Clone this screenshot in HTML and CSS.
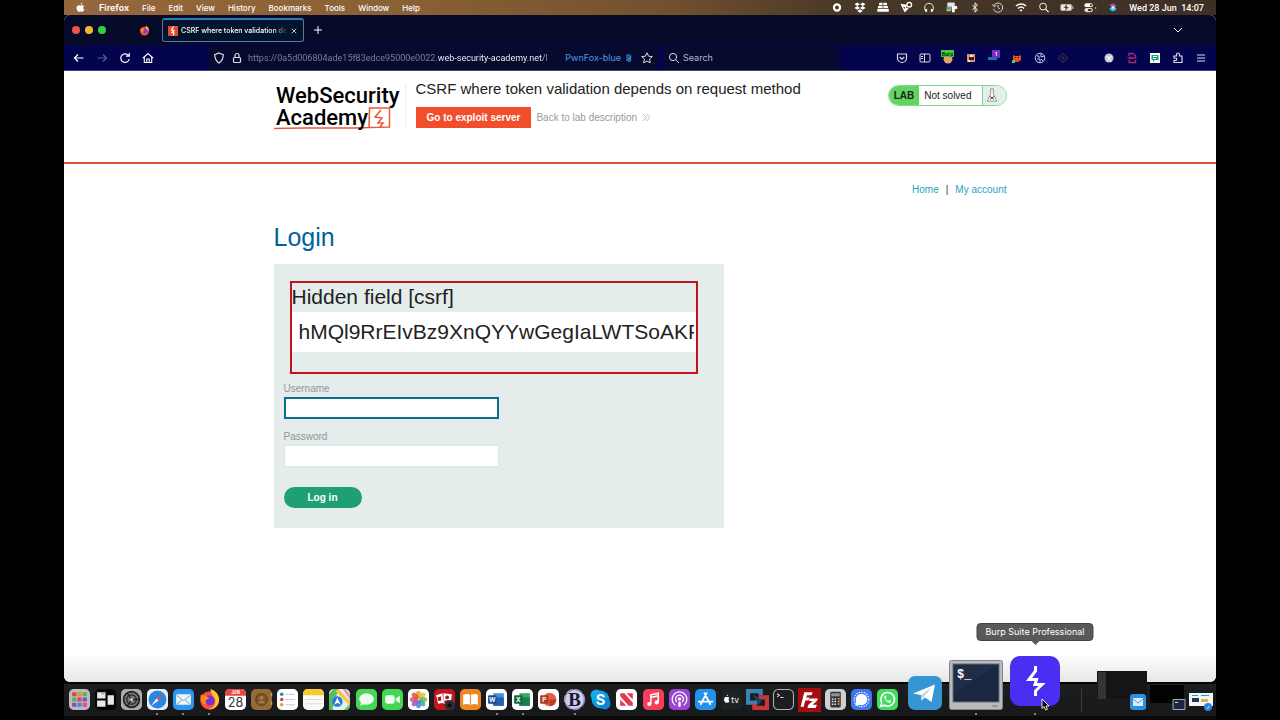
FILE: index.html
```html
<!DOCTYPE html>
<html lang="en">
<head>
    <meta charset="UTF-8">
    <meta name="viewport" content="width=device-width, initial-scale=1.0">
    <title>CSRF where token validation depends on request method</title>
    <link rel="stylesheet" href="styles.css">
</head>
<body>
<div class="desktop">

    <!-- macOS menu bar -->
    <header class="menubar">
        <nav class="menus">
            <svg class="apple" viewBox="0 0 14 14"><path fill="#fff" d="M9.4 1c.1 1-.9 2.300-2.200 2.300C7.100 2.200 8.100 1.100 9.400 1zM11.800 9.600c-.6 1.500-1.500 2.900-2.600 2.900-.8 0-1-.5-2-.5s-1.300.5-2 .5C3.700 12.500 2 9.900 2 7.500 2 5.200 3.400 4 4.900 4c.9 0 1.600.6 2.200.6S8.500 4 9.600 4c.8 0 1.600.4 2.100 1.100-1.900 1.200-1.600 3.700.1 4.500z"/></svg>
            <button class="menu menu-app">Firefox</button>
            <button class="menu">File</button>
            <button class="menu">Edit</button>
            <button class="menu">View</button>
            <button class="menu">History</button>
            <button class="menu">Bookmarks</button>
            <button class="menu">Tools</button>
            <button class="menu">Window</button>
            <button class="menu">Help</button>
        </nav>
        <div class="tray">
            <svg class="icon" viewBox="0 0 14 14"><circle cx="7" cy="7" r="3.300" fill="none" stroke="#fff" stroke-width="2.400"/></svg>
            <svg class="icon" viewBox="0 0 14 14"><path fill="#fff" d="M4 1.500l3 2-3 2-3-2zM10 1.500l3 2-3 2-3-2zM4 5.500l3 2-3 2-3-2zM10 5.500l3 2-3 2-3-2zM7 8.900l3 1.900-3 1.900-3-1.900z"/></svg>
            <svg class="icon" viewBox="0 0 14 14"><path fill="#fff" d="M3 2h3.600v2.500H2.500zM7.400 2H11l.5 2.500H7.400zM2 5.300h4.600v2.500H1.200zM7.400 5.300H12l.8 2.500H7.400zM.8 8.600h12.400v3H.8z"/></svg>
            <svg class="icon" viewBox="0 0 14 14"><path fill="#fff" d="M1 3l7 1-1 3 3 1-4.500 4.500zM4 6l1 3 1-2z"/><circle cx="10.500" cy="4" r="2.500" fill="none" stroke="#fff" stroke-width="1.500"/></svg>
            <svg class="icon" viewBox="0 0 14 14"><path fill="none" stroke="#fff" d="M4 11.500C1.500 9.500 1.500 2.500 7 2.500s5.500 7 3 9"/><path stroke="#fff" stroke-width="2" d="M4 8.500v3M10 8.500v3"/></svg>
            <svg class="icon" viewBox="0 0 14 14"><rect x="2" y="1.500" width="8" height="7" rx="1" fill="#e9e6dd"/><path fill="#4d9bd9" d="M1 6h6v3H1z"/><path fill="#e2bf3f" d="M1 9h5v2H1z"/><path fill="#fff" d="M7 6l5-1 1 3-3 1v3H7z"/></svg>
            <svg class="icon" viewBox="0 0 14 14"><path fill="none" stroke="#fff" d="M4.200 4.500l5.500 5L7 12V2l2.700 2.500-5.500 5"/></svg>
            <svg class="icon" viewBox="0 0 14 14"><path fill="none" stroke="#ddd" d="M2.500 5a5 5 0 1 1-.3 3.500M1 3.500L2.500 6 5 5M7 4v3.200l2.200 1.300"/></svg>
            <svg class="icon" viewBox="0 0 14 14"><path fill="none" stroke="#fff" stroke-width="1.500" d="M1.500 5.500c3.200-3 7.800-3 11 0M3.700 8c2-1.800 4.600-1.800 6.600 0"/><path fill="#fff" d="M5.300 9.800c1-.9 2.400-.9 3.400 0L7 11.600z"/></svg>
            <svg class="icon" viewBox="0 0 14 14"><circle cx="6" cy="6" r="3.700" fill="none" stroke="#fff"/><path stroke="#fff" stroke-width="1.300" d="M8.800 8.800L12 12"/></svg>
            <svg class="icon" viewBox="0 0 14 14"><rect x="0" y="3.500" width="12" height="7" rx="1.500" fill="#e8e4df"/><path stroke="#e8e4df" d="M13.300 5.500v3"/><path fill="#3d3026" d="M7.400 3L3.500 7.400H6L4.700 11l4.100-4.600H6.300z"/></svg>
            <svg class="icon" viewBox="0 0 14 14"><rect x="1" y="2.500" width="9" height="4" rx="2" fill="#fff"/><circle cx="8" cy="4.500" r="1.200" fill="#4a3a2c"/><rect x="1.500" y="8" width="8" height="3.500" rx="1.700" fill="none" stroke="#fff"/><circle cx="3.500" cy="9.700" r="1.300" fill="#fff"/><circle cx="13" cy="7.500" r="1" fill="#e28b2d"/></svg>
            <svg class="icon" viewBox="0 0 14 14"><circle cx="7" cy="7" r="5" fill="#25334f"/><path fill="#b64d94" d="M3 5c3-4 7-2 8 1L7 7z"/><path fill="#42c3d3" d="M3 8c2 4 6 4 8 0L7 6z"/><circle cx="7" cy="7" r="1.600" fill="#e6f4ff"/></svg>
            <span class="clock">Wed 28 Jun&nbsp; 14:07</span>
        </div>
    </header>

    <section class="window">
        <div class="tabstrip">
            <div class="lights"><span class="light red"></span><span class="light amber"></span><span class="light green"></span></div>
            <svg class="pinned" viewBox="0 0 20 20"><circle cx="10" cy="11" r="8" fill="#ff4b3a"/><path fill="#ffbd2e" d="M12 1c5 3 7 7 6 11-1-3-3-4-5-5z"/><circle cx="10.500" cy="11" r="4.500" fill="#7a3ae0"/><path fill="#ff8a1e" d="M2 8c2-3 4-2 6-1l2 2c-3 1-3 3-1 5-4-1-6-3-7-6z"/></svg>
            <div class="tab">
                <svg class="favicon" viewBox="0 0 20 20"><rect width="20" height="20" fill="#e8482c"/><path fill="none" stroke="#fff" stroke-width="2.400" d="M11 1L7 8l5 1-4 4 4 1-2 5"/></svg>
                <span class="tab-title">CSRF where token validation de</span>
                <button class="tab-close" aria-label="Close tab"><svg viewBox="0 0 8 8"><path stroke="#fff" d="M1 1l6 6M7 1L1 7"/></svg></button>
            </div>
            <button class="new-tab" aria-label="New tab"><svg viewBox="0 0 8 8"><path stroke="#fff" d="M4 0v8M0 4h8"/></svg></button>
            <button class="all-tabs" aria-label="List all tabs"><svg viewBox="0 0 8 8"><path fill="none" stroke="#fff" d="M0 2l4 4 4-4"/></svg></button>
        </div>

        <div class="toolbar">
            <div class="nav-buttons">
                <button class="tool" aria-label="Back"><svg class="icon" viewBox="0 0 14 14"><path fill="none" stroke="#fff" stroke-width="1.200" d="M11.500 7h-9M6 3.500L2.500 7 6 10.500"/></svg></button>
                <button class="tool" aria-label="Forward"><svg class="icon" viewBox="0 0 14 14"><path fill="none" stroke="#585c9c" stroke-width="1.200" d="M2.500 7h9M8 3.500L11.500 7 8 10.500"/></svg></button>
                <button class="tool" aria-label="Reload"><svg class="icon" viewBox="0 0 14 14"><path fill="none" stroke="#fff" stroke-width="1.200" d="M10.500 4.500A4.300 4.300 0 1 0 11.300 8M11.300 2v3.200H8"/></svg></button>
                <button class="tool" aria-label="Home"><svg class="icon" viewBox="0 0 14 14"><path fill="none" stroke="#fff" stroke-width="1.100" d="M2 7l5-4.500L12 7M3.300 6v5.500h7.400V6M5.800 11.500V8h2.400v3.500"/></svg></button>
            </div>
            <div class="urlbar">
                <svg class="icon" viewBox="0 0 14 14"><path fill="none" stroke="#ddd" stroke-width="1.200" d="M7 2l4.300 1.600c0 4.200-1.300 6.600-4.300 8.400-3-1.800-4.300-4.200-4.300-8.400z"/></svg>
                <svg class="icon" viewBox="0 0 14 14"><rect x="3.500" y="6.500" width="7" height="5" rx="1" fill="none" stroke="#ddd" stroke-width="1.200"/><path fill="none" stroke="#ddd" stroke-width="1.200" d="M5 6.500V4.500a2 2 0 0 1 4 0v2"/></svg>
                <input class="url" type="text" aria-label="Address" value="https://0a5d006804ade15f83edce95000e0022.web-security-academy.net/l">
                <span class="container-name">PwnFox-blue</span>
                <svg class="print" viewBox="0 0 10 14"><path fill="none" stroke="#3f95dd" stroke-width="1.500" d="M2 4c2-2.500 5-2 6 0v5c0 2-1 3-2 3.500M1.500 7c2-3 5-2 5 0s0 3-2.500 5M1.500 10c2 0 3-1 3-3"/></svg>
                <svg class="icon" viewBox="0 0 14 14"><path fill="none" stroke="#ddd" d="M7 1.800l1.600 3.400 3.700.4-2.800 2.500.8 3.700L7 10l-3.300 1.800.8-3.700-2.800-2.500 3.700-.4z"/></svg>
            </div>
            <div class="searchbar">
                <svg class="icon" viewBox="0 0 14 14"><circle cx="6" cy="6" r="3.600" fill="none" stroke="#ddd"/><path stroke="#ddd" d="M8.700 8.700L12 12"/></svg>
                <input class="search" type="text" aria-label="Search" placeholder="Search">
            </div>
            <div class="extensions">
                <svg class="icon" viewBox="0 0 14 14"><path fill="none" stroke="#ddd" stroke-width="1.200" d="M2.500 3h9v4a4.500 4.500 0 0 1-9 0zM4.700 6L7 8.200 9.300 6"/></svg>
                <svg class="icon" viewBox="0 0 14 14"><rect x="2" y="3" width="10" height="8" rx="1" fill="none" stroke="#ddd"/><path stroke="#ddd" d="M6.500 3v8M3 5.500h2M3 7.500h2"/></svg>
                <svg class="icon" viewBox="0 0 14 14"><circle cx="7" cy="8" r="4.500" fill="#e0a764"/><rect x="0" y="-1" width="13" height="7" fill="#43c83f"/><text class="badge-text" x="6.500" y="4.500" fill="#052c05">Burp</text></svg>
                <svg class="icon" viewBox="0 0 14 14"><rect x="3" y="3" width="8" height="8" fill="#d8946c"/><path fill="#411d15" d="M5 6h5v3H5z"/><path fill="#f4dfc9" d="M6 4h3v2H6zM4 9h2v2H4z"/></svg>
                <svg class="icon" viewBox="0 0 14 14"><path fill="#187ab1" d="M1 6h9v3H1z"/><rect x="5" y="-1" width="8" height="8" fill="#7230c4"/><text class="badge-text" x="9" y="5" fill="#fff">1</text></svg>
                <svg class="icon" viewBox="0 0 14 14"><path fill="#e8502a" d="M3 4l2 1h4l2-1v5l-3 2H5L3 8z"/><path fill="#401015" d="M5 6h1v1H5zM8 6h1v1H8z"/><rect x="2" y="9" width="3" height="3" fill="#3de052"/></svg>
                <svg class="icon" viewBox="0 0 14 14"><circle cx="7" cy="7" r="4.800" fill="none" stroke="#c9c9e4"/><path fill="none" stroke="#c9c9e4" d="M5 4v2h2M8 3v3l3-1M4 8h3v3M8 8l2 2"/></svg>
                <svg class="icon" viewBox="0 0 14 14"><path fill="none" stroke="#29204f" stroke-width="1.500" d="M7 2.500L11.500 7 7 11.500 2.500 7zM7 5v4M5 7h4"/></svg>
                <svg class="icon" viewBox="0 0 14 14"><path fill="#04062e" d="M3 6h8v2.500H3z"/></svg>
                <svg class="icon" viewBox="0 0 14 14"><circle cx="7" cy="7" r="4.500" fill="#c4c9cf"/><path fill="none" stroke="#fff" d="M4 5c2 2 4 2 6 0M5 10l2-3 2 3"/></svg>
                <svg class="icon" viewBox="0 0 14 14"><path fill="none" stroke="#9c2f72" stroke-width="1.300" d="M4 5V2.500h4l2.500 2V6M4 9v2.500h6.500V9M2.500 7h9M5.500 5.500v3"/></svg>
                <svg class="icon" viewBox="0 0 14 14"><rect x="2" y="2" width="10" height="10" fill="#f5fbf9"/><path fill="#1fa37d" d="M3.500 4h7v5H7l-2 2V9H3.500z"/><path stroke="#fff" d="M5 5.500h4M5 7.500h3"/></svg>
                <svg class="icon" viewBox="0 0 14 14"><path fill="none" stroke="#ddd" stroke-width="1.200" d="M3 5h2.500V3.500a1.500 1.500 0 0 1 3 0V5H11v6.500H3V9.500h1.500a1.200 1.200 0 0 0 0-2.500H3z"/></svg>
                <svg class="icon" viewBox="0 0 14 14"><path stroke="#ddd" d="M3 4h8M3 7h8M3 10h8"/></svg>
            </div>
        </div>

        <!-- Lab page -->
        <main class="page">
            <header class="lab-header">
                <div class="container lab-bar">
                    <a class="logo" href="#" aria-label="Web Security Academy">
                        <svg viewBox="0 0 128 46">
                            <path fill="none" stroke="#e8593a" stroke-width="1.500" d="M0 44.500c30-1.500 60 .5 95-1l.5-19.500h20V43l-20 .5M107 26l-6 7 7 1-4 5h5l-3 4"/>
                            <text class="logo-text" x="2" y="19">WebSecurity</text>
                            <text class="logo-text" x="2" y="41">Academy</text>
                        </svg>
                    </a>
                    <div class="lab-info">
                        <h2>CSRF where token validation depends on request method</h2>
                        <div class="lab-links">
                            <a class="exploit" href="#">Go to exploit server</a>
                            <a class="back" href="#">Back to lab description <svg viewBox="0 0 8 8"><path fill="none" stroke="#aaa" d="M0 0l4 4-4 4M4 0l4 4-4 4"/></svg></a>
                        </div>
                    </div>
                    <div class="lab-status">
                        <span class="lab-tag">LAB</span>
                        <span class="lab-state">Not solved</span>
                        <span class="lab-flask"><svg viewBox="0 0 12 16"><path fill="#fff" stroke="#777" stroke-width=".8" d="M4 1h4M4.600 1v5L1 14h10L7.400 6V1"/><path stroke="#333" d="M4 9l4 3M8 9l-4 3"/></svg></span>
                    </div>
                </div>
            </header>

            <div class="container">
                <nav class="account-links"><a href="#">Home</a><span>|</span><a href="#">My account</a></nav>
                <h1>Login</h1>
                <form class="login-form">
                    <div class="hidden-field">
                        <label for="csrf">Hidden field [csrf]</label>
                        <input id="csrf" type="text" name="csrf" value="hMQl9RrEIvBz9XnQYYwGegIaLWTSoAKF">
                    </div>
                    <label for="username">Username</label>
                    <input class="field focused" id="username" type="text" name="username">
                    <label for="password">Password</label>
                    <input class="field" id="password" type="password" name="password">
                    <button class="login-button" type="button">Log in</button>
                </form>
            </div>
        </main>
    </section>

    <!-- Dock -->
    <footer class="dock">
        <div class="apps small">
            <button class="app" aria-label="Launchpad"><svg viewBox="0 0 20 20"><rect width="20" height="20" rx="4.500" fill="#b9bcc1"/><path fill="#d8464c" d="M3 3h4v4H3zM8 8h4v4H8z"/><path fill="#f08e2c" d="M8 3h4v4H8z"/><path fill="#55b74d" d="M13 3h4v4h-4zM3 8h4v4H3z"/><path fill="#8c4bbd" d="M13 8h4v4h-4zM3 13h4v4H3z"/><path fill="#3f8de0" d="M8 13h4v4H8z"/><path fill="#e0508b" d="M13 13h4v4h-4z"/></svg></button>
            <button class="app" aria-label="Mission Control"><svg viewBox="0 0 20 20"><rect width="20" height="20" rx="4.500" fill="#050505"/><path fill="#e5e8e3" d="M2 3h8v6H2zM2 11h8v6H2zM12 6h6v9h-6z"/><path fill="#5cae7c" d="M6 4h3v1H6z"/></svg></button>
            <button class="app" aria-label="System Settings"><svg viewBox="0 0 20 20"><rect width="20" height="20" rx="4.500" fill="#a9adb0"/><circle cx="10" cy="10" r="7.500" fill="#777" stroke="#222" stroke-width="1.600"/><circle cx="10" cy="10" r="4.500" fill="none" stroke="#222" stroke-width="1.200"/><path stroke="#222" stroke-width="1.200" d="M10 10h7M10 10l-4 6M10 10L6 4"/><circle cx="10" cy="10" r="1.500" fill="#ccc"/></svg></button>
            <button class="app running" aria-label="Safari"><svg viewBox="0 0 20 20"><rect width="20" height="20" rx="4.500" fill="#e9edf2"/><circle cx="10" cy="10" r="8.500" fill="#2a86e2"/><path fill="#ed4b42" d="M16 4l-5 7-2-2z"/><path fill="#fff" d="M4 16l5-7 2 2z"/></svg></button>
            <button class="app running" aria-label="Mail"><svg viewBox="0 0 20 20"><rect width="20" height="20" rx="4.500" fill="#2b97ee"/><rect x="3" y="5" width="14" height="10" rx="1" fill="#eef6fb"/><path fill="none" stroke="#8fb1c9" d="M3.500 6l6.500 5 6.500-5M4 14.500l4-4M16 14.500l-4-4"/></svg></button>
            <button class="app running" aria-label="Firefox"><svg viewBox="0 0 20 20"><circle cx="10" cy="11" r="8.800" fill="#ff4a3d"/><path fill="#ffc52e" d="M11 0c6 2 9 7 8 12-1 5-5 8-10 7 5-1 8-5 6-10-1-2-4-4-4-9z"/><circle cx="10" cy="11" r="4.800" fill="#7433d6"/><path fill="#ff8b1d" d="M2 5c1 1 2 2 4 1l4 3c-4 1-5 3-2 6-5 0-8-4-6-10z"/></svg></button>
            <button class="app" aria-label="Calendar"><svg viewBox="0 0 20 20"><rect width="20" height="20" rx="4.500" fill="#fff"/><path fill="#e9443d" d="M0 6.500V4.500A4.500 4.500 0 0 1 4.500 0h11A4.500 4.500 0 0 1 20 4.500v2z"/><text class="cal-month" x="10" y="5">JUN</text><text class="cal-day" x="10" y="17">28</text></svg></button>
            <button class="app" aria-label="Contacts"><svg viewBox="0 0 20 20"><rect width="20" height="20" rx="4.500" fill="#946a38"/><circle cx="10" cy="10" r="5.500" fill="#7c5529" stroke="#5e401e"/><circle cx="10" cy="8.500" r="2" fill="#a37a48"/><path fill="#a37a48" d="M6.500 13.500c1-3 6-3 7 0z"/><path stroke="#d59b37" stroke-width="1.500" d="M19.500 4v3M19.500 12v3"/></svg></button>
            <button class="app" aria-label="Reminders"><svg viewBox="0 0 20 20"><rect width="20" height="20" rx="4.500" fill="#fff"/><circle cx="4.500" cy="5" r="1.700" fill="#2c7de0"/><circle cx="4.500" cy="10" r="1.700" fill="#e0473e"/><circle cx="4.500" cy="15" r="1.700" fill="#ee9a32"/><path stroke="#ccc" d="M8 5h9M8 10h9M8 15h9"/></svg></button>
            <button class="app" aria-label="Notes"><svg viewBox="0 0 20 20"><rect width="20" height="20" rx="4.500" fill="#fbfaf6"/><path fill="#f9c930" d="M0 6V4.500A4.500 4.500 0 0 1 4.500 0h11A4.500 4.500 0 0 1 20 4.500V6z"/><path stroke="#dedbd3" d="M2 10h16M2 14h16"/></svg></button>
            <button class="app" aria-label="Maps"><svg viewBox="0 0 20 20"><rect width="20" height="20" rx="4.500" fill="#e6eee4"/><path fill="#55bd61" d="M0 5l4-5h5L3 20H0z"/><path fill="#eb8eb8" d="M13 0h3l4 6v4z"/><path fill="#f6c63c" d="M9 0l11 12v4L6 2z"/><path fill="#63c36b" d="M14 20l6-6v3l-2 3z"/><circle cx="8" cy="12" r="5" fill="#2878df"/><path fill="#fff" d="M8 8l3 7-3-2-3 2z"/></svg></button>
            <button class="app" aria-label="Messages"><svg viewBox="0 0 20 20"><rect width="20" height="20" rx="4.500" fill="#43d853"/><ellipse cx="10" cy="9.500" rx="7" ry="5.500" fill="#eefcef"/><path fill="#eefcef" d="M5 12l-1 4 5-2z"/></svg></button>
            <button class="app" aria-label="FaceTime"><svg viewBox="0 0 20 20"><rect width="20" height="20" rx="4.500" fill="#43d853"/><rect x="3" y="6" width="9" height="8" rx="2" fill="#eefcef"/><path fill="#eefcef" d="M13 9l4-2.500v7L13 11z"/></svg></button>
            <button class="app" aria-label="Photos"><svg viewBox="0 0 20 20"><rect width="20" height="20" rx="4.500" fill="#fff"/><g fill-opacity=".85"><ellipse cx="10" cy="5.500" rx="2.500" ry="3.800" fill="#f39a2c"/><ellipse cx="10" cy="5.500" rx="2.500" ry="3.800" fill="#d9c636" transform="rotate(45 10 10)"/><ellipse cx="10" cy="5.500" rx="2.500" ry="3.800" fill="#74bd4f" transform="rotate(90 10 10)"/><ellipse cx="10" cy="5.500" rx="2.500" ry="3.800" fill="#45a7a1" transform="rotate(135 10 10)"/><ellipse cx="10" cy="5.500" rx="2.500" ry="3.800" fill="#4a86d4" transform="rotate(180 10 10)"/><ellipse cx="10" cy="5.500" rx="2.500" ry="3.800" fill="#8b62b7" transform="rotate(225 10 10)"/><ellipse cx="10" cy="5.500" rx="2.500" ry="3.800" fill="#cf5795" transform="rotate(270 10 10)"/><ellipse cx="10" cy="5.500" rx="2.500" ry="3.800" fill="#e9503f" transform="rotate(315 10 10)"/></g></svg></button>
            <button class="app" aria-label="Photo Booth"><svg viewBox="0 0 20 20"><rect width="20" height="20" rx="4.500" fill="#c4161f"/><path fill="#fff" d="M2 6l6-2 1 9-5 1zM9 4l8 1-1 9H9z"/><circle cx="12.500" cy="8" r="1.800" fill="#a9121c"/><path fill="#a9121c" d="M9.500 13c0-3 6-3 6 0zM3.500 8l3-1 .5 4-3 .5z"/><circle cx="15" cy="15.500" r="5" fill="#2c2e31"/><circle cx="15" cy="15.500" r="2" fill="#0c0c0e"/></svg></button>
            <button class="app" aria-label="Books"><svg viewBox="0 0 20 20"><rect width="20" height="20" rx="4.500" fill="#f08522"/><path fill="#fff" d="M3 5.500c2-1 5-1 6.500 0V15c-2-1-4.500-1-6.500 0zM10.500 5.500c2-1 5-1 6.500 0V15c-2-1-4.500-1-6.500 0z"/></svg></button>
            <button class="app running" aria-label="Word"><svg viewBox="0 0 20 20"><rect width="20" height="20" rx="4.500" fill="#fff"/><path fill="#3f93df" d="M7 4h10v12H7z"/><path fill="#2361b5" d="M7 8h10v8H7z"/><rect x="2" y="6" width="8" height="8" rx="1" fill="#174a94"/><text class="glyph" x="6" y="12.500">W</text></svg></button>
            <button class="app running" aria-label="Excel"><svg viewBox="0 0 20 20"><rect width="20" height="20" rx="4.500" fill="#fff"/><path fill="#2fad69" d="M7 4h10v12H7z"/><path fill="#16814a" d="M7 8h10v8H7z"/><rect x="2" y="6" width="8" height="8" rx="1" fill="#0f6a38"/><text class="glyph" x="6" y="12.500">X</text></svg></button>
            <button class="app" aria-label="PowerPoint"><svg viewBox="0 0 20 20"><rect width="20" height="20" rx="4.500" fill="#fff"/><circle cx="11" cy="10" r="6.500" fill="#e06443"/><path fill="#bf3c24" d="M11 10h6.500a6.500 6.500 0 0 1-6.500 6.500z"/><rect x="2" y="6" width="8" height="8" rx="1" fill="#b53a22"/><text class="glyph" x="6" y="12.500">P</text></svg></button>
            <button class="app running" aria-label="BBEdit"><svg viewBox="0 0 20 20"><circle cx="10" cy="10" r="9.500" fill="#cfcbea" stroke="#8f8ac2" stroke-width="1.500" stroke-dasharray="7 2"/><text class="glyph-b" x="10" y="16">B</text></svg></button>
            <button class="app" aria-label="Skype"><svg viewBox="0 0 20 20"><circle cx="10" cy="10" r="8.500" fill="#0e9ade"/><circle cx="6" cy="6" r="5.500" fill="#16a7e8"/><circle cx="14" cy="14" r="5.500" fill="#0b86cf"/><text class="glyph-s" x="10" y="15">S</text></svg></button>
            <button class="app" aria-label="News"><svg viewBox="0 0 20 20"><rect width="20" height="20" rx="4.500" fill="#fff"/><path fill="#e23a52" d="M4 4h4l8 9v3h-4L4 7zM4 10l6 6H4zM10 4h6v6z"/></svg></button>
            <button class="app" aria-label="Music"><svg viewBox="0 0 20 20"><rect width="20" height="20" rx="4.500" fill="#f63d5c"/><path fill="none" stroke="#fff" stroke-width="1.500" d="M7.500 14V5.500l7-1.500v8.500M7.500 8l7-1.500"/><circle cx="6" cy="14.300" r="2" fill="#fff"/><circle cx="13" cy="12.800" r="2" fill="#fff"/></svg></button>
            <button class="app" aria-label="Podcasts"><svg viewBox="0 0 20 20"><rect width="20" height="20" rx="4.500" fill="#9d43d1"/><path fill="none" stroke="#fff" stroke-width="1.200" d="M6 15.500a7 7 0 1 1 8 0M7.500 12.500a3.800 3.800 0 1 1 5 0"/><circle cx="10" cy="9.500" r="1.700" fill="#fff"/><path stroke="#fff" stroke-width="2.400" stroke-linecap="round" d="M10 13v3"/></svg></button>
            <button class="app" aria-label="App Store"><svg viewBox="0 0 20 20"><rect width="20" height="20" rx="4.500" fill="#2391ee"/><path fill="none" stroke="#fff" stroke-width="1.700" stroke-linecap="round" d="M11 4L5.500 14.500M9 4l5.500 10.500M3.500 12H12M14 12h2.500"/></svg></button>
            <button class="app" aria-label="TV"><svg viewBox="0 0 20 20"><rect width="20" height="20" rx="4.500" fill="#1d2224"/><path fill="#fff" d="M5.500 7c0-1 .5-1.500 1.300-1.700 0 1-.5 1.500-1.300 1.700zM8 11.500c-.5 1.300-1 1.800-1.700 1.500-.5-.2-.8-.2-1.300 0C3.800 13.500 2.500 11 3 9c.5-1.500 1.700-1.500 2.500-1.200C6.500 7.500 7.300 7.500 8 8.500c-1 .8-1 2.200 0 3z"/><text class="glyph-tv" x="13.500" y="13">tv</text></svg></button>
            <button class="app" aria-label="VMware Fusion"><svg viewBox="0 0 20 20"><path fill="none" stroke="#3b82b8" stroke-width="4" d="M10 13H1V2h12v4"/><path fill="none" stroke="#c8383a" stroke-width="4" d="M11 8h8v10H7v-4"/><path fill="#1b4769" d="M5 5l9 5-2 5z"/></svg></button>
            <button class="app" aria-label="Terminal"><svg viewBox="0 0 20 20"><rect x=".5" y=".5" width="19" height="19" rx="4.500" fill="#1c1e1f" stroke="#aeb1b3"/><path fill="none" stroke="#ddd" d="M4 4.500l2 1.500-2 1.500M7 8h3"/></svg></button>
            <button class="app" aria-label="FileZilla"><svg viewBox="0 0 20 20"><rect x="-1" y="-1" width="22" height="23" fill="#a50d12"/><path fill="#fff" d="M5 3h8l-1 3H7.500L7 8h3l-1 3H6l-1.500 6H1.500zM10 9h8l-1 2.500-4 3.500h4l-1 3H8l1-3 4-3.500H9.500z"/></svg></button>
            <button class="app" aria-label="Calculator"><svg viewBox="0 0 20 20"><rect width="20" height="20" rx="4.500" fill="#cfd0d1"/><rect x="5" y="2.500" width="10" height="15" rx="1" fill="#333"/><path fill="#8b9498" d="M6 4h8v3H6z"/><path stroke="#ddd" stroke-width="1.400" stroke-dasharray="1.500 1" d="M6.500 9.500h5M6.500 12h5M6.500 14.500h5"/><path stroke="#f19a35" stroke-width="1.700" stroke-dasharray="1.500 1" d="M13 8.500v7"/></svg></button>
            <button class="app" aria-label="Signal"><svg viewBox="0 0 20 20"><rect width="20" height="20" rx="4.500" fill="#3d76ee"/><circle cx="10" cy="10" r="7" fill="none" stroke="#fff" stroke-dasharray="1.500 1"/><circle cx="10" cy="10" r="5.500" fill="#fff"/><path fill="#fff" d="M5 12l-1 4 5-1z"/></svg></button>
            <button class="app" aria-label="WhatsApp"><svg viewBox="0 0 20 20"><rect width="20" height="20" rx="4.500" fill="#44dc60"/><path fill="#44dc60" stroke="#fff" stroke-width="1.500" d="M3.500 16.500l1-3.500a6.500 6.500 0 1 1 2.500 2.500z"/><path fill="#fff" d="M7 6.500c1-.8 1.500 0 2 1.500l-.8 1c.6 1.200 1.400 2 2.500 2.500l1-1c1.500.5 2.200 1 1.500 2-2 2.500-7-2.500-6.200-6z"/></svg></button>
        </div>
        <div class="apps magnified">
            <button class="app telegram" aria-label="Telegram"><svg viewBox="0 0 34 34"><rect width="34" height="34" rx="7" fill="#3596d4"/><path fill="#fff" d="M5 17.500L27 8.500 23.500 26l-6.500-4.500-3.500 3-.5-5.500z"/><path fill="#bdd8e8" d="M13 19l11-8-8 9.500-2.500 4z"/></svg></button>
            <button class="app iterm running" aria-label="iTerm"><svg viewBox="0 0 54 50"><rect x=".5" y=".5" width="53" height="49" rx="2" fill="#b9bbbb" stroke="#80868b"/><rect x="4" y="4" width="46" height="38" fill="#1a2743" stroke="#686d73"/><path fill="#26334e" d="M5 5h44L5 32z" opacity=".5"/><text class="prompt" x="8" y="18">$_</text><path stroke="#777" d="M43 46h6"/></svg></button>
            <button class="app burp running" aria-label="Burp Suite Professional">
                <svg viewBox="0 0 50 54"><rect width="50" height="50" rx="10" fill="#4a2ef2"/><path fill="none" stroke="#fff" stroke-width="3" d="M25.500 10v5L19 23.500h7.500l-1.500 5h7L25.500 35v5"/></svg>
                <span class="tooltip" role="tooltip">Burp Suite Professional</span>
                <svg class="cursor" viewBox="0 0 9 13"><path fill="#000" stroke="#fff" stroke-width=".9" d="M1 1v9.500l2.200-2L4.700 12l1.700-.8L5 8h3z"/></svg>
            </button>
        </div>
        <div class="divider"></div>
        <div class="minimized">
            <svg class="mini-dark" viewBox="0 0 50 40"><path fill="#151516" d="M0 0h50v28H0z"/><path fill="#333436" d="M1 1h8v27H1z"/><rect x="33" y="23" width="16" height="16" rx="3" fill="#2b8fe4"/><path fill="#dcecf6" d="M36 27h10v8H36z"/><path fill="none" stroke="#6a9bc0" d="M36 28l5 4 5-4"/></svg>
            <svg class="mini-term" viewBox="0 0 36 26"><path fill="#020202" d="M0 0h34v18H0z"/><path fill="#1a2743" stroke="#aaa" d="M23 14.500h12v10H23z"/><path stroke="#ddd" d="M25 17.500h3"/></svg>
            <svg class="mini-page" viewBox="0 0 24 18"><path fill="#f2f5f5" d="M0 0h24v13H0z"/><path stroke="#3296b8" d="M3 2.500h6M12 2.500h8"/><path fill="#263850" d="M3 5h7v4H3z"/><path fill="#e0b64c" d="M12 6h7v3h-7z"/><circle cx="19" cy="14" r="4" fill="#2d86de"/><path fill="#fff" d="M21 12l-1.500 3-2 1z"/></svg>
        </div>
    </footer>
</div>
</body>
</html>
```
FILE: styles.css
```css
* {
    box-sizing: border-box;
}
body {
    margin: 0;
    background-color: #000;
    font-family: "Liberation Sans", Arial, sans-serif;
    font-size: 10px;
}
button {
    margin: 0;
    padding: 0;
    border: none;
    background: none;
    font: inherit;
    color: inherit;
    cursor: pointer;
}
input {
    font: inherit;
    min-width: 0;
}
svg {
    display: block;
    flex-shrink: 0;
}
a {
    text-decoration: none;
}
.icon {
    width: 14px;
    height: 14px;
    overflow: visible;
}
.desktop {
    display: flex;
    flex-direction: column;
    min-height: 100vh;
    margin: 0 5%;
    overflow: hidden;
}

/* Menu bar */
.menubar,
.tabstrip,
.toolbar {
    font-family: Inter, "Open Sans", sans-serif;
}
.menubar {
    display: flex;
    justify-content: space-between;
    align-items: center;
    height: 15px;
    padding: 0 12px 0 11px;
    background: linear-gradient(to right, #95673d, #8a6035 30%, #73512f 52%, #483827 68%, #3d2f25);
    color: #fff;
    font-size: 8px;
    font-weight: 500;
}
.menus {
    display: flex;
    align-items: center;
    gap: 13px;
}
.apple {
    width: 11px;
    height: 11px;
}
.menu-app {
    font-size: 9px;
    font-weight: 600;
}
.tray {
    display: flex;
    align-items: center;
    gap: 9px;
}
.tray .icon {
    height: 13px;
}
.clock {
    font-family: Roboto, sans-serif;
    font-size: 9px;
    white-space: nowrap;
}

/* Browser chrome */
.window {
    flex: 1;
    display: flex;
    flex-direction: column;
    border-radius: 6px;
    overflow: hidden;
    background-color: #fff;
}
.tabstrip {
    display: flex;
    align-items: center;
    height: 30px;
    padding: 0 34px 0 8px;
    background-color: #060b2a;
    color: #fff;
}
.lights {
    display: flex;
    gap: 5px;
}
.light {
    width: 8px;
    height: 8px;
    border-radius: 50%;
}
.red {
    background-color: #f2504a;
}
.amber {
    background-color: #f5b52f;
}
.green {
    background-color: #34cb45;
}
.pinned {
    width: 11px;
    height: 11px;
    margin: 0 12px 0 33px;
}
.tab {
    display: flex;
    align-items: center;
    gap: 3px;
    width: 142px;
    height: 24px;
    padding: 0 6px 0 5px;
    background-color: #03132b;
    border: 1px solid #5a76a8;
    border-top: 2px solid #2c7db5;
    border-radius: 3px;
}
.favicon {
    width: 10px;
    height: 10px;
}
.tab-title {
    flex: 1;
    overflow: hidden;
    font-size: 7px;
    font-weight: 500;
    white-space: nowrap;
    mask-image: linear-gradient(to right, #000 85%, transparent);
}
.tab-close svg {
    width: 6px;
    height: 6px;
}
.new-tab {
    margin-left: 10px;
}
.new-tab svg,
.all-tabs svg {
    width: 8px;
    height: 8px;
}
.all-tabs {
    margin-left: auto;
}
.toolbar {
    display: flex;
    align-items: center;
    height: 26px;
    padding: 0 8px;
    background-color: #03034e;
    border-bottom: 1px solid #48446c;
    color: #ddd;
    font-size: 9px;
}
.nav-buttons {
    display: flex;
    gap: 9px;
    margin-right: 54px;
}
.urlbar,
.searchbar {
    display: flex;
    align-items: center;
    height: 24px;
    background-color: #060a2e;
    border-radius: 2px;
}
.urlbar {
    flex: 0 1 449px;
    gap: 4px;
    padding: 0 4px 0 3px;
}
.url,
.search {
    flex: 1;
    padding: 0;
    border: none;
    outline: none;
    background: none;
    color: #ddd;
}
.url {
    /* dim host prefix, bright domain, faded path */
    background: linear-gradient(to right, #7f82a8 189px, #fff 189px, #fff 292px, #333 304px);
    background-clip: text;
    -webkit-background-clip: text;
    color: transparent;
    font-family: Roboto, sans-serif;
}
.container-name {
    color: #4a9be6;
}
.print {
    width: 7px;
    height: 10px;
    margin-right: 4px;
}
.searchbar {
    flex: 0 1 176px;
    gap: 2px;
    margin-left: 5px;
    padding: 0 4px;
}
.search::placeholder {
    color: #b4b6c8;
    opacity: 1;
}
.extensions {
    display: flex;
    gap: 9px;
    margin-left: auto;
}
.badge-text {
    font-size: 5px;
    font-weight: 600;
    text-anchor: middle;
}

/* Lab page */
.page {
    flex: 1;
    background: linear-gradient(to top, #e6e6e7, #fff 28px);
}
.container {
    width: 733px;
    max-width: 100%;
    margin: 0 auto;
}
.lab-header {
    border-bottom: 2px solid #dd5335;
}
.lab-bar {
    display: flex;
    align-items: flex-start;
    height: 91px;
    padding-top: 13px;
}
.logo {
    margin-right: 3px;
}
.logo svg {
    width: 128px;
    height: 46px;
}
.logo-text {
    font-family: Roboto, sans-serif;
    font-size: 22px;
    font-weight: 500;
    fill: #000;
}
.lab-info {
    flex: 1;
    padding-left: 10px;
    border-left: 1px solid #eee;
}
.lab-info h2 {
    margin: 0 0 13px;
    color: #222;
    font-size: 15px;
    font-weight: 400;
    line-height: 10px;
}
.lab-links {
    display: flex;
    align-items: center;
    gap: 5px;
}
.exploit {
    padding: 0 11px;
    background-color: #f04e2d;
    color: #fff;
    font-weight: 700;
    line-height: 21px;
}
.back {
    display: flex;
    align-items: center;
    gap: 6px;
    color: #999;
}
.back svg {
    width: 7px;
    height: 7px;
}
.lab-status {
    display: flex;
    height: 21px;
    margin-top: 1px;
    border: 1px solid #83d988;
    border-radius: 11px;
    overflow: hidden;
    color: #222;
    line-height: 19px;
}
.lab-tag {
    padding: 0 5px;
    background-color: #62d461;
    font-weight: 700;
}
.lab-state {
    padding: 0 10px 0 5px;
}
.lab-flask {
    display: flex;
    align-items: center;
    padding: 0 8px 0 3px;
    background-color: #e4eeec;
    border-left: 1px solid #83d988;
}
.lab-flask svg {
    width: 12px;
    height: 15px;
}
.account-links {
    display: flex;
    justify-content: flex-end;
    gap: 7px;
    padding-top: 20px;
    line-height: 12px;
    color: #333;
}
.account-links a {
    color: #29a3c0;
}
h1 {
    margin: 26px 0 11px;
    color: #00639a;
    font-size: 25px;
    font-weight: 400;
    line-height: 31px;
}
.login-form {
    display: flex;
    flex-direction: column;
    align-items: flex-start;
    width: 450px;
    max-width: 100%;
    padding: 17px 10px 20px;
    background-color: #e4edec;
}
.login-form label {
    color: #8f9696;
    line-height: 12px;
}
.hidden-field {
    align-self: stretch;
    height: 93px;
    margin: 0 16px 9px 6px;
    border: 2px solid #c0141c;
}
.login-form .hidden-field label {
    display: block;
    margin-bottom: 2px;
    color: #222;
    font-size: 21px;
    line-height: 27px;
}
.hidden-field input {
    width: 100%;
    height: 40px;
    padding: 0 2px 0 7px;
    border: none;
    background-color: #fff;
    color: #222;
    font-size: 21px;
}
.field {
    width: 215px;
    height: 22px;
    margin: 2px 0 12px;
    padding: 0 5px;
    border: 1px solid #dde7e6;
    outline: none;
    background-color: #fff;
}
.focused {
    border: 2px solid #0b6b94;
}
.login-button {
    width: 78px;
    height: 21px;
    margin-top: 8px;
    border-radius: 11px;
    background-color: #1fa074;
    color: #fff;
    font-weight: 700;
}

/* Dock */
.dock {
    display: flex;
    align-items: flex-end;
    height: 38px;
    padding-left: 2px;
    background: linear-gradient(to bottom, #050505 2px, #1d1e20 2px, #17181a 34px, #090908 34px);
}
.apps {
    display: flex;
    align-items: flex-end;
}
.small {
    flex: 0 0 835px;
    justify-content: space-between;
}
.app {
    position: relative;
    display: flex;
    flex-direction: column;
    align-items: center;
    width: 26px;
    padding-bottom: 5px;
}
.app > svg {
    width: 21px;
    height: 21px;
    overflow: visible;
}
.app::after {
    content: "";
    width: 2px;
    height: 2px;
    margin-top: 3px;
    border-radius: 1px;
}
.running::after {
    background-color: #aaa;
}
.magnified {
    gap: 7px;
    margin-left: 7px;
}
.telegram,
.telegram > svg {
    width: 34px;
    height: auto;
}
.iterm,
.iterm > svg {
    width: 54px;
    height: auto;
}
.burp,
.burp > svg {
    width: 50px;
    height: auto;
}
.tooltip {
    position: absolute;
    left: 50%;
    bottom: 79px;
    transform: translateX(-50%);
    padding: 0 8px;
    border: 1px solid #444;
    border-radius: 4px;
    background-color: #59595a;
    color: #fff;
    font-family: Inter, sans-serif;
    font-size: 9px;
    line-height: 16px;
    white-space: nowrap;
}
.tooltip::after {
    content: "";
    position: absolute;
    left: 50%;
    top: 100%;
    margin-left: -5px;
    border: 5px solid transparent;
    border-top-color: #59595a;
    border-bottom: none;
}
.app > .cursor {
    position: absolute;
    left: 31px;
    bottom: 9px;
    width: 9px;
    height: 13px;
}
.divider {
    width: 1px;
    height: 24px;
    margin: 0 15px 8px 21px;
    background-color: #3c3d3f;
}
.minimized {
    display: flex;
    align-items: flex-end;
    gap: 3px;
    padding-bottom: 9px;
}
.mini-dark {
    width: 50px;
    height: 40px;
}
.mini-term {
    width: 36px;
    height: 26px;
}
.mini-page {
    width: 24px;
    height: 18px;
}

/* Lettering inside the app icons */
.cal-month,
.cal-day,
.glyph,
.glyph-b,
.glyph-s,
.glyph-tv {
    font-family: Inter, sans-serif;
    text-anchor: middle;
}
.cal-month {
    fill: #fff;
    font-size: 4px;
    font-weight: 700;
}
.cal-day {
    fill: #333;
    font-size: 12px;
}
.glyph {
    fill: #fff;
    font-size: 6px;
    font-weight: 700;
}
.glyph-b {
    fill: #17172b;
    font-family: "Liberation Serif", serif;
    font-size: 18px;
    font-weight: 700;
}
.glyph-s {
    fill: #fff;
    font-size: 14px;
    font-weight: 700;
}
.glyph-tv {
    fill: #fff;
    font-size: 8px;
}
.prompt {
    fill: #fff;
    font-family: "Liberation Mono", monospace;
    font-size: 12px;
    font-weight: 700;
}
```
